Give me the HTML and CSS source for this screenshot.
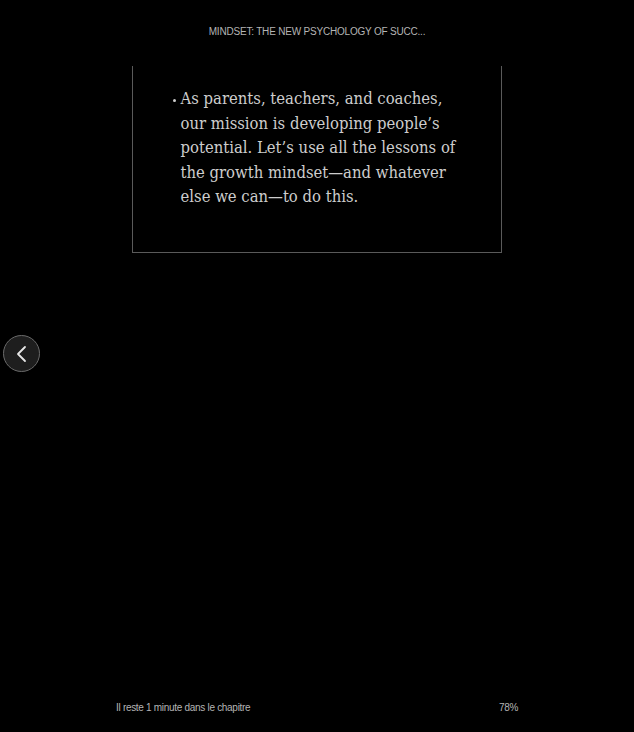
FILE: index.html
```html
<!DOCTYPE html>
<html>
<head>
<meta charset="utf-8">
<link rel="stylesheet" href="styles.css">
</head>
<body>
<div class="page">
  <header class="title">MINDSET: THE NEW PSYCHOLOGY OF SUCC...</header>
  <main class="content">
    <div class="box">
      <ul class="list">
        <li>As parents, teachers, and coaches, our mission is developing people’s potential. Let’s use all the lessons of the growth mindset—and whatever else we can—to do this.</li>
      </ul>
    </div>
  </main>
  <footer class="footer">
    <span>Il reste 1 minute dans le chapitre</span>
    <span>78%</span>
  </footer>
  <button class="prev" aria-label="Précédent">
    <svg width="14" height="18" viewBox="0 0 14 18"><path d="M10 2 L3 9 L10 16" fill="none" stroke="#e6e6e6" stroke-width="1.8" stroke-linecap="round" stroke-linejoin="round"/></svg>
  </button>
</div>
</body>
</html>
```
FILE: styles.css
```css
html, body {
  margin: 0;
  padding: 0;
  background: #000;
}
.page {
  position: relative;
  width: 634px;
  height: 732px;
  display: flex;
  flex-direction: column;
  font-family: "Liberation Sans", Arial, sans-serif;
}
.title {
  height: 66px;
  box-sizing: border-box;
  padding-top: 26px;
  text-align: center;
  font-size: 10px;
  color: #b4b4b4;
  letter-spacing: -0.2px;
}
.content {
  flex: 1;
  display: flex;
  justify-content: center;
}
.box {
  margin-left: -1px;
  width: 370px;
  height: 187px;
  border: 1px solid #5a5a5a;
  border-top: none;
  box-sizing: border-box;
}
.list {
  margin: 0;
  padding: 21px 36px 0 48px;
  list-style: none;
  font-family: "DejaVu Serif Condensed", "DejaVu Serif", serif;
  font-stretch: condensed;
  font-size: 16.5px;
  line-height: 24.5px;
  color: #cdcdcd;
}
.list li {
  position: relative;
}
.list li::before {
  content: "";
  position: absolute;
  left: -8px;
  top: 12px;
  width: 3px;
  height: 3px;
  border-radius: 50%;
  background: #cdcdcd;
}
.footer {
  height: 30px;
  display: flex;
  justify-content: space-between;
  padding: 0 116px 0 116px;
  font-size: 10px;
  color: #b4b4b4;
  letter-spacing: -0.3px;
}
.prev {
  position: absolute;
  left: 3px;
  top: 335px;
  width: 37px;
  height: 37px;
  border-radius: 50%;
  border: 1px solid #6a6a6a;
  background: #1e1e1e;
  padding: 0;
  display: flex;
  align-items: center;
  justify-content: center;
}
```
